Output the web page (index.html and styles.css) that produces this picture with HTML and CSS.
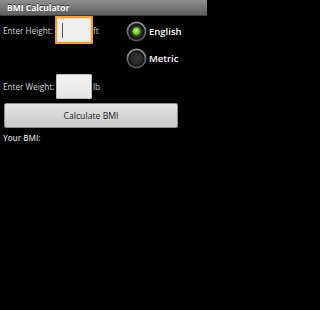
FILE: index.html
```html
<!DOCTYPE html>
<html>
<head>
<meta charset="utf-8">
<link rel="stylesheet" href="styles.css">
</head>
<body>
<div class="titlebar">BMI Calculator</div>
<div class="content">
  <div class="form">
    <div class="fields">
      <div class="row">
        <span class="label">Enter Height:</span>
        <span class="box focused"><span class="cursor"></span></span>
        <span class="unit">ft</span>
      </div>
      <div class="row weight">
        <span class="label">Enter Weight:</span>
        <span class="box"></span>
        <span class="unit">lb</span>
      </div>
    </div>
    <div class="radios">
      <div class="radio">
        <svg class="rb" width="21" height="21" viewBox="0 0 21 21">
          <defs>
            <linearGradient id="ring" x1="0" y1="0" x2="0" y2="1">
              <stop offset="0" stop-color="#9a9a9a"/>
              <stop offset="1" stop-color="#4a4a4a"/>
            </linearGradient>
            <radialGradient id="dot" cx="0.45" cy="0.4" r="0.6">
              <stop offset="0" stop-color="#c8ff70"/>
              <stop offset="0.5" stop-color="#7ad82a"/>
              <stop offset="1" stop-color="#3c8a10"/>
            </radialGradient>
          </defs>
          <circle cx="10.5" cy="10.5" r="10" fill="url(#ring)"/>
          <circle cx="10.5" cy="10.5" r="8.3" fill="#151515"/>
          <circle cx="10.5" cy="10.5" r="6.5" fill="#2a2a2a"/>
          <circle cx="10.5" cy="10.5" r="4.2" fill="url(#dot)"/>
        </svg>
        <span class="rtext">English</span>
      </div>
      <div class="radio">
        <svg class="rb" width="21" height="21" viewBox="0 0 21 21">
          <defs>
            <linearGradient id="ring2" x1="0" y1="0" x2="0" y2="1">
              <stop offset="0" stop-color="#9a9a9a"/>
              <stop offset="1" stop-color="#4a4a4a"/>
            </linearGradient>
          </defs>
          <circle cx="10.5" cy="10.5" r="10" fill="url(#ring2)"/>
          <circle cx="10.5" cy="10.5" r="8.3" fill="#151515"/>
          <circle cx="10.5" cy="10.5" r="6.5" fill="#2a2a2a"/>
          <circle cx="10.5" cy="10.5" r="3.5" fill="#333"/>
        </svg>
        <span class="rtext">Metric</span>
      </div>
    </div>
  </div>
  <div class="button">Calculate BMI</div>
  <div class="result">Your BMI:</div>
</div>
</body>
</html>
```

FILE: styles.css
```css
html, body {
  margin: 0;
  padding: 0;
  background: #000;
  width: 207px;
  height: 310px;
  overflow: hidden;
  font-family: "Open Sans", "DejaVu Sans", sans-serif;
}

.titlebar {
  height: 15px;
  line-height: 15px;
  padding-left: 7px;
  background: linear-gradient(#8e8e8e, #5e5e5e);
  border-bottom: 1px solid #3a3a3a;
  color: #fff;
  font-weight: bold;
  font-size: 8.5px;
  text-shadow: 0 -1px 0 #333;
}

.content {
  padding-left: 3px;
}

.form {
  display: flex;
}

.fields {
  width: 123px;
  flex: none;
  display: flex;
  flex-direction: column;
  gap: 30px;
}

.row {
  display: flex;
  align-items: center;
  height: 28px;
}

.row.weight {
  height: 25px;
}

.label {
  color: #d4d4d4;
  font-size: 8.2px;
  width: 53px;
  flex: none;
  white-space: nowrap;
}

.box {
  box-sizing: border-box;
  flex: none;
  width: 36px;
  height: 25px;
  background: linear-gradient(#f2f2f2, #e6e6e6);
  border: 1px solid #bcbcbc;
  border-radius: 1px;
  margin-right: 1px;
  display: flex;
  align-items: center;
}

.box.focused {
  width: 38px;
  height: 28px;
  margin-left: -1px;
  margin-right: 0;
  border: 2px solid #f0a040;
  box-shadow: inset 0 0 0 1px #f8d8a8;
  background: #efefef;
}

.cursor {
  width: 1px;
  height: 15px;
  background: #555;
  margin-left: 5px;
}

.unit {
  color: #d4d4d4;
  font-size: 8.2px;
}

.radios {
  display: flex;
  flex-direction: column;
  padding-top: 5px;
  gap: 6px;
}

.radio {
  display: flex;
  align-items: center;
  height: 21px;
}

.rb {
  display: block;
  flex: none;
}

.rtext {
  color: #fff;
  font-size: 9.5px;
  font-weight: 600;
  margin-left: 2px;
}

.button {
  box-sizing: border-box;
  width: 174px;
  height: 25px;
  margin-top: 4px;
  margin-left: 1px;
  border: 1px solid #8c8c8c;
  border-radius: 2px;
  background: linear-gradient(#e4e4e4, #cacaca);
  color: #222;
  font-size: 8.7px;
  display: flex;
  align-items: center;
  justify-content: center;
}

.result {
  margin-top: 4px;
  color: #d4d4d4;
  font-size: 8px;
  font-weight: 600;
  line-height: 12px;
}
```
